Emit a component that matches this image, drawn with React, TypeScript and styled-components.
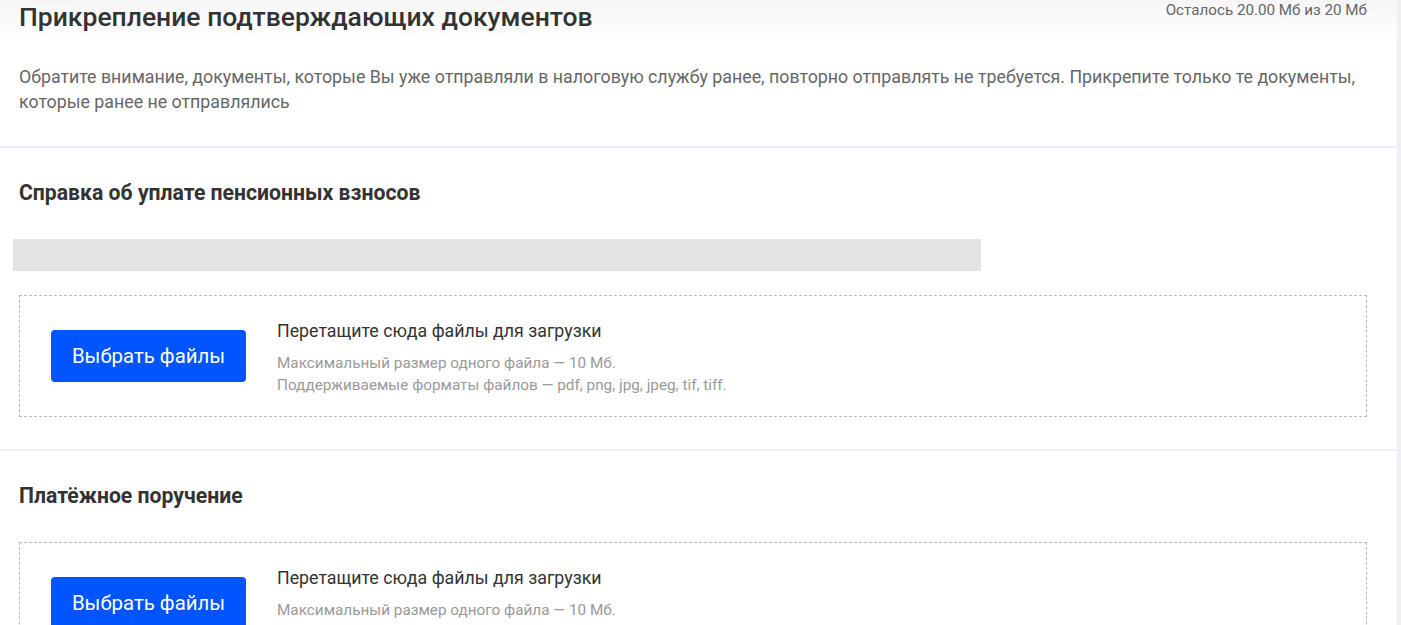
import React from "react";
import styled, { createGlobalStyle } from "styled-components";

const GlobalStyle = createGlobalStyle`
  body {
    margin: 0;
    background: #ffffff;
    font-family: Roboto, "Noto Sans", "Liberation Sans", sans-serif;
  }
`;

const Page = styled.div`
  width: 1397px;
  height: 625px;
  overflow: hidden;
  border-right: 4px solid #eef0f4;
  background: #ffffff;
`;

const Header = styled.div`
  display: flex;
  justify-content: space-between;
  align-items: flex-start;
  padding: 0 30px 6px 19px;
  background: linear-gradient(180deg, #f6f6f6 0%, #ffffff 100%);
`;

const Title = styled.h1`
  margin: 0;
  font-size: 26.5px;
  line-height: 34px;
  font-weight: 500;
  color: #333333;
`;

const Quota = styled.span`
  font-size: 15.2px;
  line-height: 20px;
  color: #666666;
`;

const Note = styled.p`
  margin: 24px 0 0;
  padding: 0 30px 32px 19px;
  font-size: 17.8px;
  line-height: 25px;
  color: #666666;
`;

const Divider = styled.div`
  height: 2px;
  background: #edf0fb;
`;

const Section = styled.section`
  padding: 33px 30px 32px 19px;
`;

const SectionTitle = styled.h2`
  margin: 0 0 34px;
  font-size: 21.2px;
  line-height: 24px;
  font-weight: 700;
  color: #333333;
`;

const Placeholder = styled.div`
  width: 968px;
  height: 32px;
  margin: 0 0 24px -6px;
  background: #e4e4e4;
`;

const DropZone = styled.div`
  display: flex;
  align-items: center;
  gap: 31px;
  height: 122px;
  padding: 0 31px;
  border: 1px dashed #b8b8c0;
  box-sizing: border-box;
`;

const PickButton = styled.button`
  flex: none;
  width: 195px;
  height: 52px;
  border: none;
  border-radius: 4px;
  background: #0055ff;
  color: #ffffff;
  font-family: inherit;
  font-size: 20.4px;
  cursor: pointer;
`;

const Info = styled.div`
  display: flex;
  flex-direction: column;
  padding-top: 3px;
`;

const DropText = styled.div`
  font-size: 17.8px;
  line-height: 22px;
  color: #333333;
  margin-bottom: 10px;
`;

const Hint = styled.div`
  font-size: 15.3px;
  line-height: 22px;
  color: #9a9a9a;
`;

interface UploadProps {
  title: string;
  loading?: boolean;
}

const UploadSection = ({ title, loading }: UploadProps) => (
  <Section>
    <SectionTitle>{title}</SectionTitle>
    {loading && <Placeholder />}
    <DropZone>
      <PickButton>Выбрать файлы</PickButton>
      <Info>
        <DropText>Перетащите сюда файлы для загрузки</DropText>
        <Hint>Максимальный размер одного файла — 10 Мб.</Hint>
        <Hint>Поддерживаемые форматы файлов — pdf, png, jpg, jpeg, tif, tiff.</Hint>
      </Info>
    </DropZone>
  </Section>
);

export default function App() {
  return (
    <Page>
      <GlobalStyle />
      <Header>
        <Title>Прикрепление подтверждающих документов</Title>
        <Quota>Осталось 20.00 Мб из 20 Мб</Quota>
      </Header>
      <Note>
        Обратите внимание, документы, которые Вы уже отправляли в налоговую службу ранее, повторно
        отправлять не требуется. Прикрепите только те документы, которые ранее не отправлялись
      </Note>
      <Divider />
      <UploadSection title="Справка об уплате пенсионных взносов" loading />
      <Divider />
      <UploadSection title="Платёжное поручение" />
    </Page>
  );
}
